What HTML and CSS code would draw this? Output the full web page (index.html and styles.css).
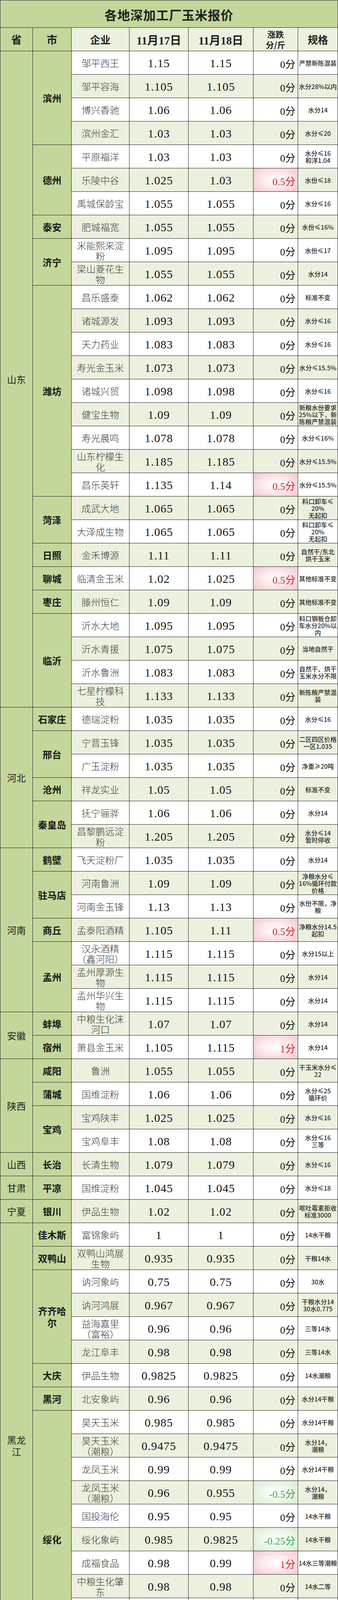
FILE: index.html
```html
<!DOCTYPE html>
<html lang="zh-CN">
<head>
<meta charset="utf-8">
<title>各地深加工厂玉米报价</title>
<link rel="stylesheet" href="styles.css">
</head>
<body>
<div class="page">
<div class="sheet">
  <div class="c title">各地深加工厂玉米报价</div>
  <div class="row head">
    <div class="c g hbig">省</div>
    <div class="c g hbig">市</div>
    <div class="c hmid">企业</div>
    <div class="c hdate">11月17日</div>
    <div class="c hdate">11月18日</div>
    <div class="c hchg"><span>涨跌<br>分/斤</span></div>
    <div class="c hmid">规格</div>
  </div>
  <div class="body">
    <div class="row"><div class="c g prov s28">山东</div><div class="c g city s4">滨州</div><div class="c co">邹平西王</div><div class="c num">1.15</div><div class="c num">1.15</div><div class="c chg">0分</div><div class="c spec">严禁新陈混装</div></div>
    <div class="row"><div class="c co">邹平容海</div><div class="c num">1.105</div><div class="c num">1.105</div><div class="c chg">0分</div><div class="c spec">水分28%以内</div></div>
    <div class="row"><div class="c co">博兴香驰</div><div class="c num">1.06</div><div class="c num">1.06</div><div class="c chg">0分</div><div class="c spec">水分14</div></div>
    <div class="row"><div class="c co">滨州金汇</div><div class="c num">1.03</div><div class="c num">1.03</div><div class="c chg">0分</div><div class="c spec">水分≤20</div></div>
    <div class="row"><div class="c g city s3">德州</div><div class="c co">平原福洋</div><div class="c num">1.03</div><div class="c num">1.03</div><div class="c chg">0分</div><div class="c spec"><span>水分≤16<br>和洋1.04</span></div></div>
    <div class="row"><div class="c co">乐陵中谷</div><div class="c num">1.025</div><div class="c num">1.03</div><div class="c chg up">0.5分</div><div class="c spec">水份≤18</div></div>
    <div class="row"><div class="c co">禹城保龄宝</div><div class="c num">1.055</div><div class="c num">1.055</div><div class="c chg">0分</div><div class="c spec">水分≤16</div></div>
    <div class="row"><div class="c g city">泰安</div><div class="c co">肥城福宽</div><div class="c num">1.055</div><div class="c num">1.055</div><div class="c chg">0分</div><div class="c spec">水份≤16%</div></div>
    <div class="row"><div class="c g city s2">济宁</div><div class="c co"><span>米能熙来淀<br>粉</span></div><div class="c num">1.095</div><div class="c num">1.095</div><div class="c chg">0分</div><div class="c spec">水份≤17</div></div>
    <div class="row"><div class="c co"><span>梁山菱花生<br>物</span></div><div class="c num">1.055</div><div class="c num">1.055</div><div class="c chg">0分</div><div class="c spec">水分14</div></div>
    <div class="row"><div class="c g city s9">潍坊</div><div class="c co">昌乐盛泰</div><div class="c num">1.062</div><div class="c num">1.062</div><div class="c chg">0分</div><div class="c spec">标准不变</div></div>
    <div class="row"><div class="c co">诸城源发</div><div class="c num">1.093</div><div class="c num">1.093</div><div class="c chg">0分</div><div class="c spec">水分≤16</div></div>
    <div class="row"><div class="c co">天力药业</div><div class="c num">1.083</div><div class="c num">1.083</div><div class="c chg">0分</div><div class="c spec">水分≤16</div></div>
    <div class="row"><div class="c co">寿光金玉米</div><div class="c num">1.073</div><div class="c num">1.073</div><div class="c chg">0分</div><div class="c spec">水分≤15.5%</div></div>
    <div class="row"><div class="c co">诸城兴贸</div><div class="c num">1.098</div><div class="c num">1.098</div><div class="c chg">0分</div><div class="c spec">水分≤16</div></div>
    <div class="row"><div class="c co">健宝生物</div><div class="c num">1.09</div><div class="c num">1.09</div><div class="c chg">0分</div><div class="c spec"><span>新粮水份要求<br>25%以下，新<br>陈粮严禁混装</span></div></div>
    <div class="row"><div class="c co">寿光晨鸣</div><div class="c num">1.078</div><div class="c num">1.078</div><div class="c chg">0分</div><div class="c spec">水分≤16%</div></div>
    <div class="row"><div class="c co"><span>山东柠檬生<br>化</span></div><div class="c num">1.185</div><div class="c num">1.185</div><div class="c chg">0分</div><div class="c spec">水分≤15.5%</div></div>
    <div class="row"><div class="c co">昌乐英轩</div><div class="c num">1.135</div><div class="c num">1.14</div><div class="c chg up">0.5分</div><div class="c spec">水分≤15.5%</div></div>
    <div class="row"><div class="c g city s2">菏泽</div><div class="c co">成武大地</div><div class="c num">1.065</div><div class="c num">1.065</div><div class="c chg">0分</div><div class="c spec"><span>料口卸车≤<br>20%<br>无起扣</span></div></div>
    <div class="row"><div class="c co">大泽成生物</div><div class="c num">1.065</div><div class="c num">1.065</div><div class="c chg">0分</div><div class="c spec"><span>料口卸车≤<br>20%<br>无起扣</span></div></div>
    <div class="row"><div class="c g city">日照</div><div class="c co">金禾博源</div><div class="c num">1.11</div><div class="c num">1.11</div><div class="c chg">0分</div><div class="c spec"><span>自然干/东北<br>烘干玉米</span></div></div>
    <div class="row"><div class="c g city">聊城</div><div class="c co">临清金玉米</div><div class="c num">1.02</div><div class="c num">1.025</div><div class="c chg up">0.5分</div><div class="c spec">其他标准不变</div></div>
    <div class="row"><div class="c g city">枣庄</div><div class="c co">滕州恒仁</div><div class="c num">1.09</div><div class="c num">1.09</div><div class="c chg">0分</div><div class="c spec">其他标准不变</div></div>
    <div class="row"><div class="c g city s4">临沂</div><div class="c co">沂水大地</div><div class="c num">1.095</div><div class="c num">1.095</div><div class="c chg">0分</div><div class="c spec"><span>料口钢板仓卸<br>车水分20%以<br>内</span></div></div>
    <div class="row"><div class="c co">沂水青援</div><div class="c num">1.075</div><div class="c num">1.075</div><div class="c chg">0分</div><div class="c spec">当地自然干</div></div>
    <div class="row"><div class="c co">沂水鲁洲</div><div class="c num">1.083</div><div class="c num">1.083</div><div class="c chg">0分</div><div class="c spec"><span>自然干、烘干<br>玉米水分不限</span></div></div>
    <div class="row"><div class="c co"><span>七星柠檬科<br>技</span></div><div class="c num">1.133</div><div class="c num">1.133</div><div class="c chg">0分</div><div class="c spec"><span>新陈粮严禁混<br>装</span></div></div>
    <div class="row"><div class="c g prov s6">河北</div><div class="c g city">石家庄</div><div class="c co">德瑞淀粉</div><div class="c num">1.035</div><div class="c num">1.035</div><div class="c chg">0分</div><div class="c spec">水分≤16</div></div>
    <div class="row"><div class="c g city s2">邢台</div><div class="c co">宁晋玉锋</div><div class="c num">1.035</div><div class="c num">1.035</div><div class="c chg">0分</div><div class="c spec"><span>二区四区价格<br>一区1.035</span></div></div>
    <div class="row"><div class="c co">广玉淀粉</div><div class="c num">1.035</div><div class="c num">1.035</div><div class="c chg">0分</div><div class="c spec">净重≥20吨</div></div>
    <div class="row"><div class="c g city">沧州</div><div class="c co">祥龙实业</div><div class="c num">1.05</div><div class="c num">1.05</div><div class="c chg">0分</div><div class="c spec">标准不变</div></div>
    <div class="row"><div class="c g city s2">秦皇岛</div><div class="c co">抚宁骊骅</div><div class="c num">1.06</div><div class="c num">1.06</div><div class="c chg">0分</div><div class="c spec">水分14</div></div>
    <div class="row"><div class="c co"><span>昌黎鹏远淀<br>粉</span></div><div class="c num">1.205</div><div class="c num">1.205</div><div class="c chg">0分</div><div class="c spec"><span>水分≤14<br>暂时停收</span></div></div>
    <div class="row"><div class="c g prov s7">河南</div><div class="c g city">鹤壁</div><div class="c co">飞天淀粉厂</div><div class="c num">1.035</div><div class="c num">1.035</div><div class="c chg">0分</div><div class="c spec">水分14</div></div>
    <div class="row"><div class="c g city s2">驻马店</div><div class="c co">河南鲁洲</div><div class="c num">1.09</div><div class="c num">1.09</div><div class="c chg">0分</div><div class="c spec"><span>净粮水分≤<br>16%循环付款<br>价格</span></div></div>
    <div class="row"><div class="c co">河南金玉锋</div><div class="c num">1.13</div><div class="c num">1.13</div><div class="c chg">0分</div><div class="c spec"><span>水份不限，净<br>粮</span></div></div>
    <div class="row"><div class="c g city">商丘</div><div class="c co">孟泰阳酒精</div><div class="c num">1.105</div><div class="c num">1.11</div><div class="c chg up">0.5分</div><div class="c spec"><span>净粮水分14.5<br>起扣</span></div></div>
    <div class="row"><div class="c g city s3">孟州</div><div class="c co"><span>汉永酒精<br>（鑫河阳）</span></div><div class="c num">1.115</div><div class="c num">1.115</div><div class="c chg">0分</div><div class="c spec">水分15以上</div></div>
    <div class="row"><div class="c co"><span>孟州厚源生<br>物</span></div><div class="c num">1.115</div><div class="c num">1.115</div><div class="c chg">0分</div><div class="c spec">水分14</div></div>
    <div class="row"><div class="c co"><span>孟州华兴生<br>物</span></div><div class="c num">1.115</div><div class="c num">1.115</div><div class="c chg">0分</div><div class="c spec">水分14</div></div>
    <div class="row"><div class="c g prov s2">安徽</div><div class="c g city">蚌埠</div><div class="c co"><span>中粮生化沫<br>河口</span></div><div class="c num">1.07</div><div class="c num">1.07</div><div class="c chg">0分</div><div class="c spec">水分14</div></div>
    <div class="row"><div class="c g city">宿州</div><div class="c co">萧县金玉米</div><div class="c num">1.105</div><div class="c num">1.115</div><div class="c chg up">1分</div><div class="c spec">水分14</div></div>
    <div class="row"><div class="c g prov s4">陕西</div><div class="c g city">咸阳</div><div class="c co">鲁洲</div><div class="c num">1.055</div><div class="c num">1.055</div><div class="c chg">0分</div><div class="c spec"><span>干玉米水分≤<br>22</span></div></div>
    <div class="row"><div class="c g city">蒲城</div><div class="c co">国维淀粉</div><div class="c num">1.06</div><div class="c num">1.06</div><div class="c chg">0分</div><div class="c spec"><span>水分≤25<br>循环价</span></div></div>
    <div class="row"><div class="c g city s2">宝鸡</div><div class="c co">宝鸡陕丰</div><div class="c num">1.025</div><div class="c num">1.025</div><div class="c chg">0分</div><div class="c spec">水分≤16</div></div>
    <div class="row"><div class="c co">宝鸡阜丰</div><div class="c num">1.08</div><div class="c num">1.08</div><div class="c chg">0分</div><div class="c spec"><span>水分≤16<br>三等</span></div></div>
    <div class="row"><div class="c g prov">山西</div><div class="c g city">长治</div><div class="c co">长清生物</div><div class="c num">1.079</div><div class="c num">1.079</div><div class="c chg">0分</div><div class="c spec">水分≤16</div></div>
    <div class="row"><div class="c g prov">甘肃</div><div class="c g city">平凉</div><div class="c co">国维淀粉</div><div class="c num">1.045</div><div class="c num">1.045</div><div class="c chg">0分</div><div class="c spec">水分≤18</div></div>
    <div class="row"><div class="c g prov">宁夏</div><div class="c g city">银川</div><div class="c co">伊品生物</div><div class="c num">1.02</div><div class="c num">1.02</div><div class="c chg">0分</div><div class="c spec"><span>呕吐霉素拒收<br>标准3000</span></div></div>
    <div class="row"><div class="c g prov s19"><span>黑龙<br>江</span></div><div class="c g city">佳木斯</div><div class="c co">富锦象屿</div><div class="c num">1</div><div class="c num">1</div><div class="c chg">0分</div><div class="c spec">14水干粮</div></div>
    <div class="row"><div class="c g city">双鸭山</div><div class="c co"><span>双鸭山鸿展<br>生物</span></div><div class="c num">0.935</div><div class="c num">0.935</div><div class="c chg">0分</div><div class="c spec">干粮14水</div></div>
    <div class="row"><div class="c g city s4"><span>齐齐哈<br>尔</span></div><div class="c co">讷河象屿</div><div class="c num">0.75</div><div class="c num">0.75</div><div class="c chg">0分</div><div class="c spec">30水</div></div>
    <div class="row"><div class="c co">讷河鸿展</div><div class="c num">0.967</div><div class="c num">0.967</div><div class="c chg">0分</div><div class="c spec"><span>干粮水分14<br>30水0.775</span></div></div>
    <div class="row"><div class="c co"><span>益海嘉里<br>（富裕）</span></div><div class="c num">0.96</div><div class="c num">0.96</div><div class="c chg">0分</div><div class="c spec">三等14水</div></div>
    <div class="row"><div class="c co">龙江阜丰</div><div class="c num">0.98</div><div class="c num">0.98</div><div class="c chg">0分</div><div class="c spec">三等14水</div></div>
    <div class="row"><div class="c g city">大庆</div><div class="c co">伊品生物</div><div class="c num">0.9825</div><div class="c num">0.9825</div><div class="c chg">0分</div><div class="c spec">14水潮粮</div></div>
    <div class="row"><div class="c g city">黑河</div><div class="c co">北安象屿</div><div class="c num">0.96</div><div class="c num">0.96</div><div class="c chg">0分</div><div class="c spec">水分14干粮</div></div>
    <div class="row"><div class="c g city s11">绥化</div><div class="c co">昊天玉米</div><div class="c num">0.985</div><div class="c num">0.985</div><div class="c chg">0分</div><div class="c spec">水分14干粮</div></div>
    <div class="row"><div class="c co"><span>昊天玉米<br>（潮粮）</span></div><div class="c num">0.9475</div><div class="c num">0.9475</div><div class="c chg">0分</div><div class="c spec"><span>水分14，<br>潮粮</span></div></div>
    <div class="row"><div class="c co">龙凤玉米</div><div class="c num">0.99</div><div class="c num">0.99</div><div class="c chg">0分</div><div class="c spec">水分14干粮</div></div>
    <div class="row"><div class="c co"><span>龙凤玉米<br>（潮粮）</span></div><div class="c num">0.96</div><div class="c num">0.955</div><div class="c chg down">-0.5分</div><div class="c spec"><span>水分14，<br>潮粮</span></div></div>
    <div class="row"><div class="c co">国投海伦</div><div class="c num">0.95</div><div class="c num">0.95</div><div class="c chg">0分</div><div class="c spec">14水干粮</div></div>
    <div class="row"><div class="c co">绥化象屿</div><div class="c num">0.985</div><div class="c num">0.9825</div><div class="c chg down">-0.25分</div><div class="c spec">14水干粮</div></div>
    <div class="row"><div class="c co">成福食品</div><div class="c num">0.98</div><div class="c num">0.99</div><div class="c chg up">1分</div><div class="c spec">14水三等潮粮</div></div>
    <div class="row"><div class="c co"><span>中粮生化肇<br>东</span></div><div class="c num">0.98</div><div class="c num">0.98</div><div class="c chg">0分</div><div class="c spec">14水二等</div></div>
    <div class="row"><div class="c co">新和成</div><div class="c num">0.95</div><div class="c num">0.95</div><div class="c chg">0分</div><div class="c spec">14水潮粮</div></div>
    <div class="row"><div class="c co">京粮龙江</div><div class="c num">0.985</div><div class="c num">0.985</div><div class="c chg">0分</div><div class="c spec"><span>水分14<br>干粮</span></div></div>
    <div class="row"><div class="c co"></div><div class="c num"></div><div class="c num"></div><div class="c chg"></div><div class="c spec"></div></div>
  </div>
</div>
</div>
</body>
</html>
```

FILE: styles.css
```css
html, body {
  margin: 0;
  padding: 0;
  background: #ffffff;
}

body {
  font-family: "Noto Sans CJK SC", "Noto Sans", sans-serif;
  color: #222222;
}

.page {
  width: 864px;
  height: 4179px;
  overflow: hidden;
}

.sheet {
  width: 864px;
  box-sizing: border-box;
  display: grid;
  grid-template-columns: 82px 98px 147px 150px 165px 113px 101px;
  grid-template-rows: 69px 59px;
  grid-auto-rows: 59px;
  gap: 1px;
  padding: 1px;
  background: #1d1d1d;
}

.row, .body { display: contents; }

.c {
  display: flex;
  align-items: center;
  justify-content: center;
  text-align: center;
  background: #ffffff;
  overflow: hidden;
}

.title {
  grid-column: 1 / -1;
  background: #c4d79b;
  font-size: 32px;
  font-weight: 700;
  letter-spacing: 1px;
  color: #1f1f1f;
  padding-top: 2px;
}

.head > .c {
  background: #ebf1de;
  font-weight: 700;
  color: #1f1f1f;
}

.head > .c.g { background: #c4d79b; }

.hbig { font-size: 27px; }

.hmid { font-size: 26px; }

.hdate {
  font-family: "Liberation Serif", "Noto Sans CJK SC", serif;
  font-size: 29px;
}

.hchg {
  font-size: 21px;
  line-height: 27px;
}

.body > .row:nth-child(even) > .c { background: #ebf1de; }

.body > .row > .c.g { background: #c4d79b; }

.s2 { grid-row: span 2; }
.s3 { grid-row: span 3; }
.s4 { grid-row: span 4; }
.s6 { grid-row: span 6; }
.s7 { grid-row: span 7; }
.s9 { grid-row: span 9; }
.s11 { grid-row: span 11; }
.s19 { grid-row: span 19; }
.s28 { grid-row: span 28; }

.prov {
  font-size: 24px;
  line-height: 30px;
  color: #1e1e1e;
}

.city {
  font-size: 24px;
  font-weight: 700;
  line-height: 30px;
  color: #161616;
}

.co {
  font-size: 24px;
  line-height: 27px;
  font-weight: 300;
  color: #3a3a3a;
}

.num {
  font-family: "Liberation Serif", serif;
  font-size: 30px;
  letter-spacing: 1px;
  color: #141414;
  padding-top: 3px;
}

.chg {
  font-family: "Liberation Serif", "Noto Sans CJK SC", serif;
  font-size: 26px;
  color: #141414;
  justify-content: flex-end;
  padding: 3px 6px 0 0;
  white-space: nowrap;
}

.body > .row > .c.up {
  background: radial-gradient(ellipse at center, #ffffff 0%, #fdecee 40%, #f3c6cb 100%);
  color: #d3242e;
}

.body > .row > .c.down {
  background: radial-gradient(ellipse at center, #ffffff 0%, #eff7eb 45%, #d6ebcc 100%);
  color: #3aa563;
}

.spec {
  font-size: 16px;
  line-height: 18px;
  font-weight: 500;
  color: #2a2a2a;
}
```
